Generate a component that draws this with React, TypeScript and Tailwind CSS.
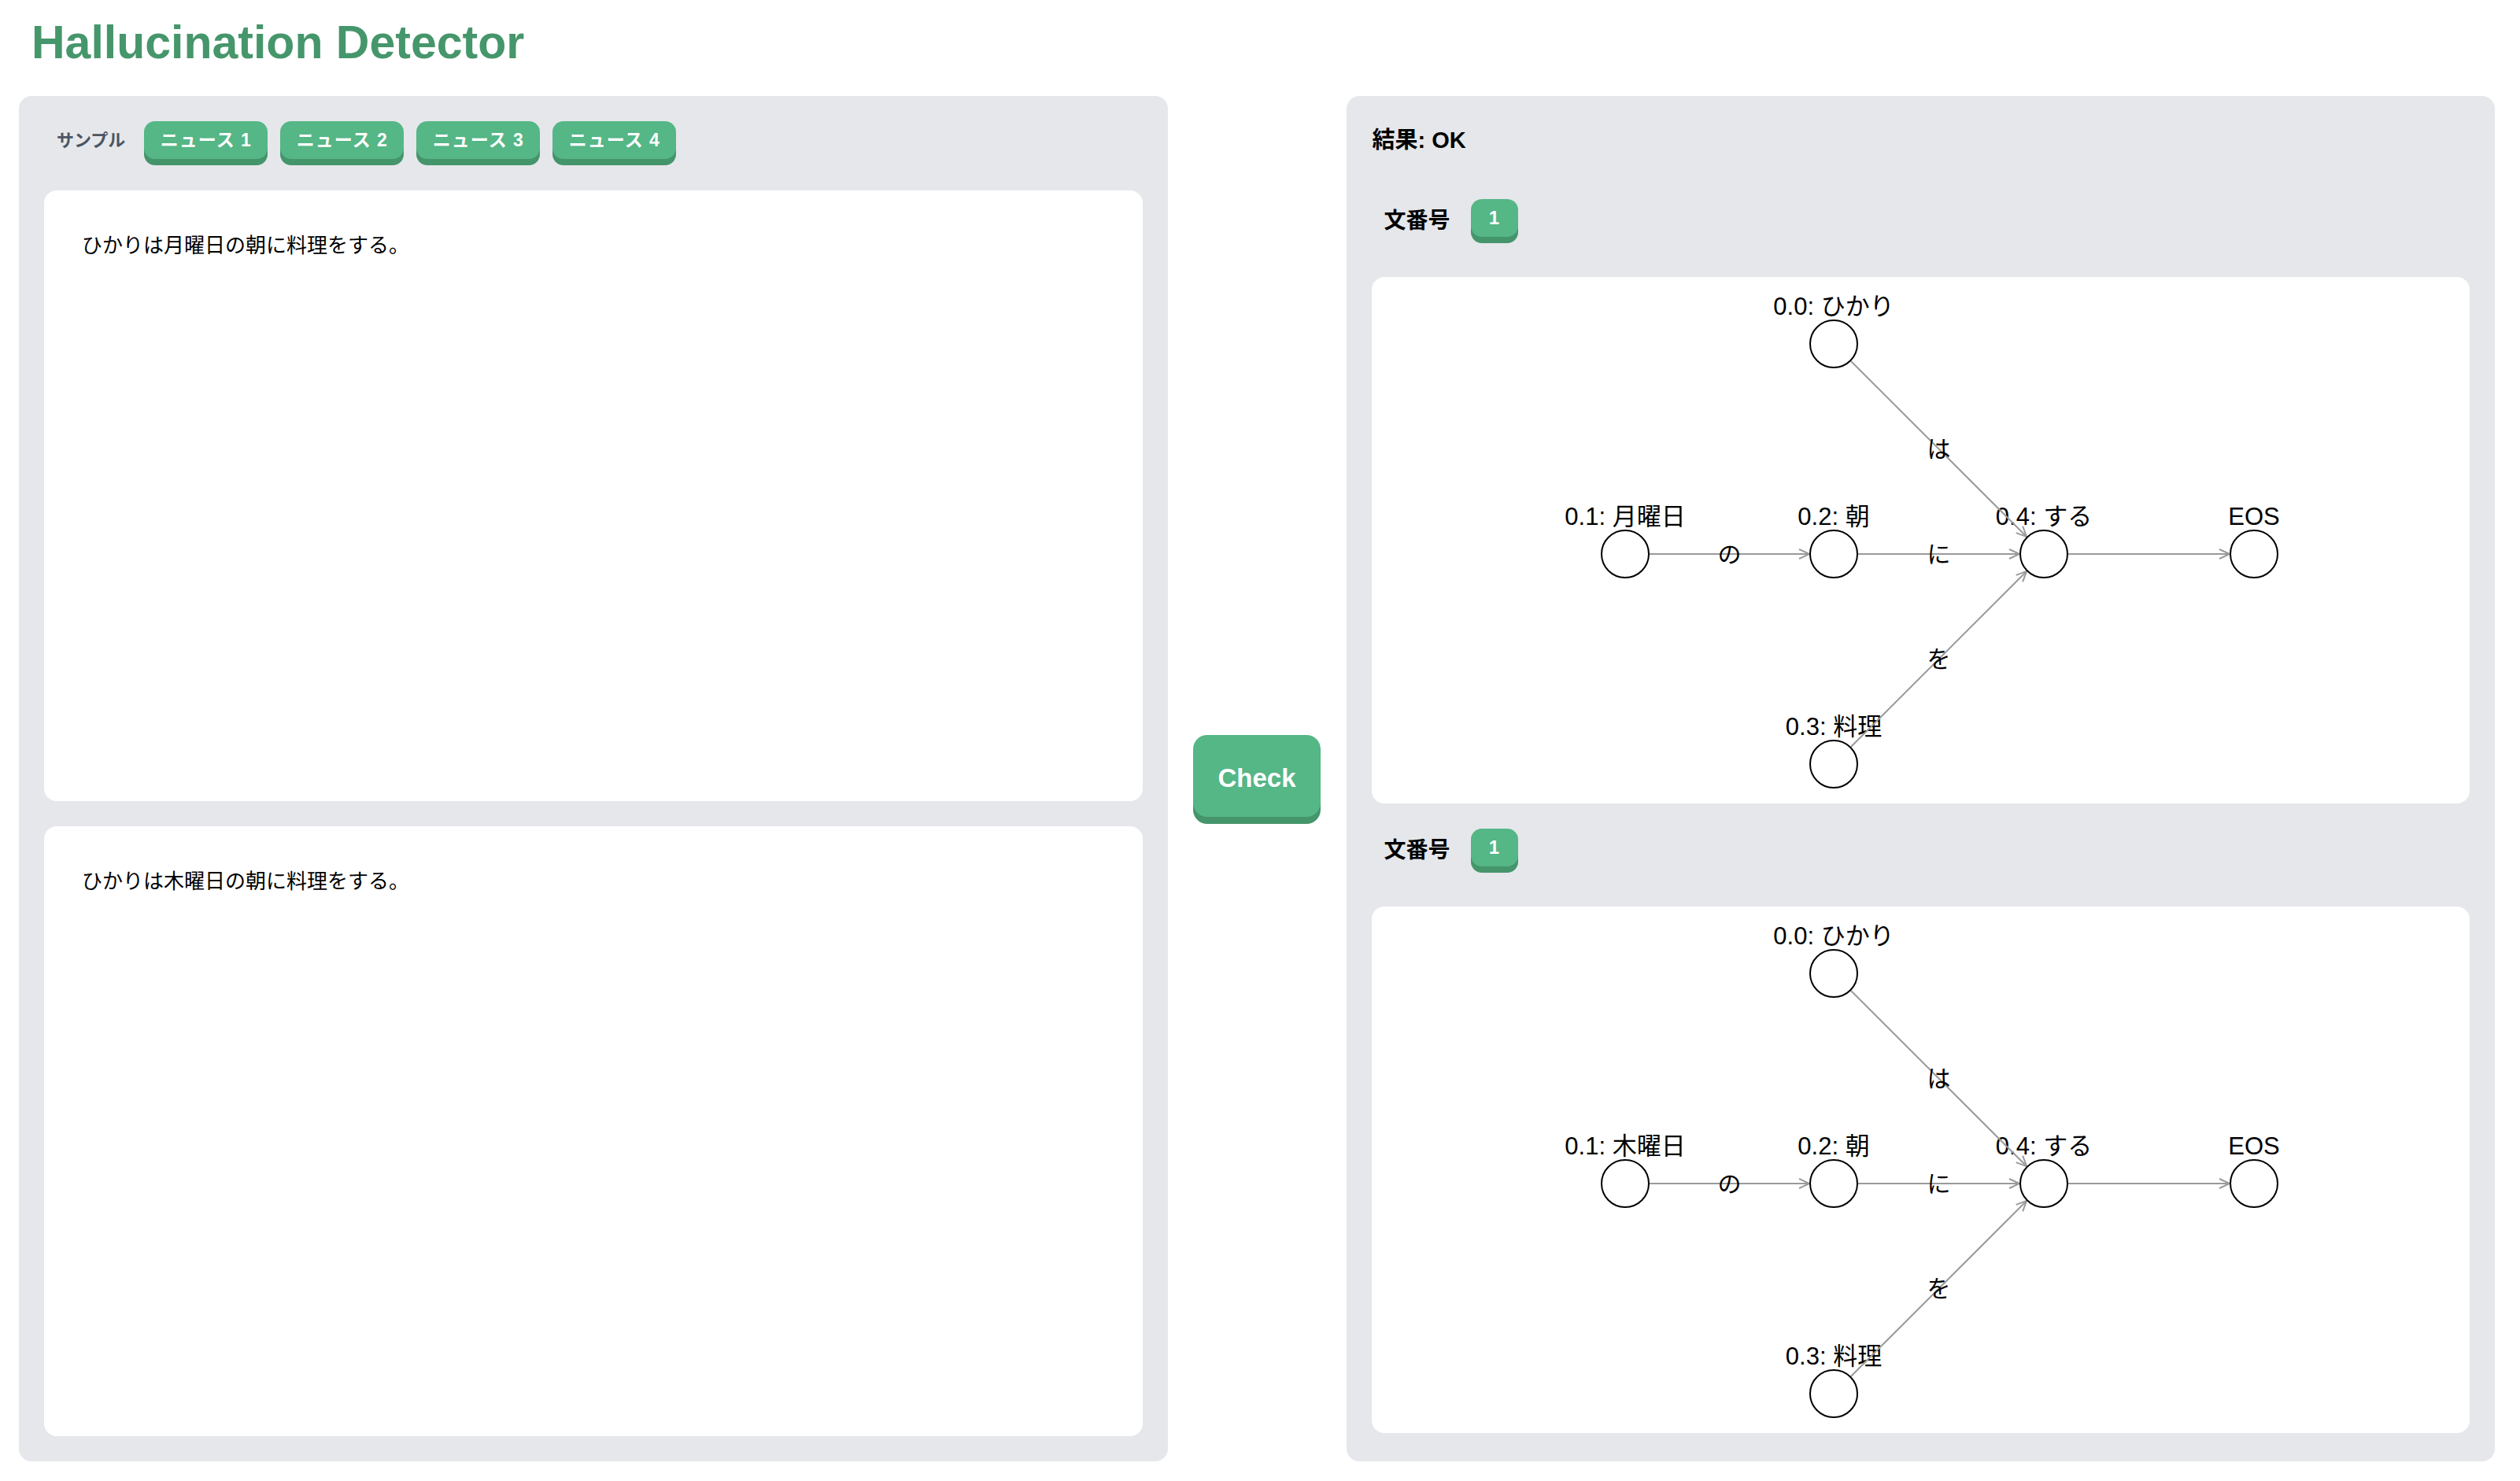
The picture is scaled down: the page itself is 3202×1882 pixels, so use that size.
import React from "react";

const FONT = "font-['Liberation_Sans','Noto_Sans_CJK_JP',sans-serif]";

type N = { id: string; label: string; x: number; y: number };
type E = { from: string; to: string; label: string };

const COLS = [322, 587, 854, 1121];
const ROWS = [85, 352, 619];
const R = 30;

function Graph({ day }: { day: string }) {
  const nodes: N[] = [
    { id: "0.0", label: "0.0: ひかり", x: COLS[1], y: ROWS[0] },
    { id: "0.1", label: `0.1: ${day}`, x: COLS[0], y: ROWS[1] },
    { id: "0.2", label: "0.2: 朝", x: COLS[1], y: ROWS[1] },
    { id: "0.3", label: "0.3: 料理", x: COLS[1], y: ROWS[2] },
    { id: "0.4", label: "0.4: する", x: COLS[2], y: ROWS[1] },
    { id: "EOS", label: "EOS", x: COLS[3], y: ROWS[1] },
  ];
  const edges: E[] = [
    { from: "0.0", to: "0.4", label: "は" },
    { from: "0.1", to: "0.2", label: "の" },
    { from: "0.2", to: "0.4", label: "に" },
    { from: "0.3", to: "0.4", label: "を" },
    { from: "0.4", to: "EOS", label: "" },
  ];
  const byId = Object.fromEntries(nodes.map((n) => [n.id, n]));
  const ff = "'Liberation Sans', 'Noto Sans CJK JP', sans-serif";
  return (
    <svg className="block w-full h-full">
      {nodes.map((n) => (
        <text
          key={"l" + n.id}
          x={n.x}
          y={n.y - 37}
          textAnchor="middle"
          fontFamily={ff}
          fontSize={31}
          fill="#000"
        >
          {n.label}
        </text>
      ))}
      {edges.map((e, i) => {
        const a = byId[e.from];
        const b = byId[e.to];
        const dx = b.x - a.x;
        const dy = b.y - a.y;
        const len = Math.hypot(dx, dy);
        const ux = dx / len;
        const uy = dy / len;
        const sx = a.x + ux * (R + 1);
        const sy = a.y + uy * (R + 1);
        const ex = b.x - ux * (R + 1);
        const ey = b.y - uy * (R + 1);
        const bx = ex - ux * 13;
        const by = ey - uy * 13;
        const px = -uy * 6;
        const py = ux * 6;
        return (
          <g key={"e" + i}>
            <line x1={sx} y1={sy} x2={ex} y2={ey} stroke="#9a9a9a" strokeWidth={2} />
            <polyline
              points={`${bx + px},${by + py} ${ex},${ey} ${bx - px},${by - py}`}
              fill="none"
              stroke="#9a9a9a"
              strokeWidth={2}
            />
          </g>
        );
      })}
      {edges.map((e, i) => {
        if (!e.label) return null;
        const a = byId[e.from];
        const b = byId[e.to];
        return (
          <text
            key={"t" + i}
            x={(a.x + b.x) / 2}
            y={(a.y + b.y) / 2}
            textAnchor="middle"
            dominantBaseline="central"
            fontFamily={ff}
            fontSize={30}
            fill="#000"
          >
            {e.label}
          </text>
        );
      })}
      {nodes.map((n) => (
        <circle key={"c" + n.id} cx={n.x} cy={n.y} r={R} fill="#fff" stroke="#000" strokeWidth={2} />
      ))}
    </svg>
  );
}

function SampleButton({ label }: { label: string }) {
  return (
    <button className="mb-2 flex h-12 w-[157px] items-center justify-center rounded-[14px] bg-[#55b686] text-[23px] font-bold tracking-[1px] text-white shadow-[0_8px_0_0_#45956b]">
      {label}
    </button>
  );
}

function Section({ day, first }: { day: string; first?: boolean }) {
  return (
    <div className={first ? "mt-[51px] flex flex-col" : "mt-8 flex flex-col"}>
      <div className="ml-4 flex h-14 items-start gap-[26px]">
        <span className="mt-[14px] text-[28px] font-bold leading-[28px] text-black">文番号</span>
        <span className="flex h-12 w-[60px] items-center justify-center rounded-[14px] bg-[#55b686] text-[24px] font-bold text-white shadow-[0_8px_0_0_#45956b]">
          1
        </span>
      </div>
      <div className="mt-[43px] h-[669px] rounded-2xl bg-white">
        <Graph day={day} />
      </div>
    </div>
  );
}

export default function App() {
  return (
    <div className={`min-h-screen bg-white ${FONT}`}>
      <h1 className="pl-10 pt-6 text-[59px] font-bold leading-[60px] text-[#46966b]">
        Hallucination Detector
      </h1>
      <div className="mt-[38px] flex pl-6 pr-8">
        <div className="flex h-[1735px] flex-1 flex-col rounded-2xl bg-[#e5e7eb] p-8">
          <div className="flex h-14 items-start">
            <span className="ml-4 mt-[14px] text-[22px] font-bold leading-[22px] text-[#4b5563]">サンプル</span>
            <div className="ml-6 flex gap-4">
              <SampleButton label="ニュース 1" />
              <SampleButton label="ニュース 2" />
              <SampleButton label="ニュース 3" />
              <SampleButton label="ニュース 4" />
            </div>
          </div>
          <div className="mt-8 flex flex-1 flex-col gap-8">
            <div className="flex-1 rounded-2xl bg-white px-12 pt-[52px] text-[26px] leading-[36px] text-black">
              ひかりは月曜日の朝に料理をする。
            </div>
            <div className="flex-1 rounded-2xl bg-white px-12 pt-[52px] text-[26px] leading-[36px] text-black">
              ひかりは木曜日の朝に料理をする。
            </div>
          </div>
        </div>
        <div className="flex w-[227px] shrink-0 items-center justify-center">
          <button className="mb-2 flex h-[104px] w-[162px] items-center justify-center rounded-[18px] bg-[#55b686] pt-[6px] text-[33px] font-bold text-white shadow-[0_9px_0_0_#45956b]">
            Check
          </button>
        </div>
        <div className="flex h-[1735px] flex-1 flex-col rounded-2xl bg-[#e5e7eb] px-8 pt-8">
          <div className="flex h-12 items-center pl-[1px] pt-[2px] text-[29px] font-bold text-black">結果: OK</div>
          <Section day="月曜日" first />
          <Section day="木曜日" />
        </div>
      </div>
    </div>
  );
}
